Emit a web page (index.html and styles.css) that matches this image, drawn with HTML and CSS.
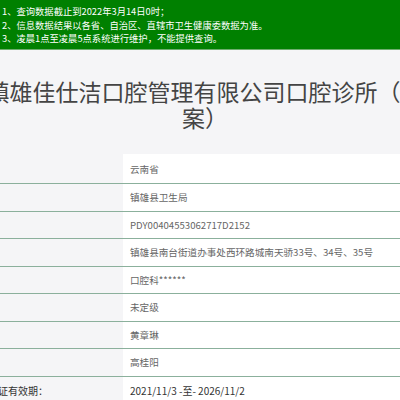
FILE: index.html
```html
<!DOCTYPE html>
<html lang="zh-CN">
<head>
<meta charset="utf-8">
<title>医疗机构查询</title>
<link rel="stylesheet" href="styles.css">
</head>
<body>
<div class="notice">
  <p>1、查询数据截止到2022年3月14日0时；</p>
  <p>2、信息数据结果以各省、自治区、直辖市卫生健康委数据为准。</p>
  <p>3、凌晨1点至凌晨5点系统进行维护，不能提供查询。</p>
</div>
<h1 class="title">镇雄佳仕洁口腔管理有限公司口腔诊所（备案）</h1>
<div class="info">
  <div class="row first"><div class="label">省份：</div><div class="value">云南省</div></div>
  <div class="row"><div class="label">登记机关：</div><div class="value">镇雄县卫生局</div></div>
  <div class="row"><div class="label">登记号：</div><div class="value">PDY00404553062717D2152</div></div>
  <div class="row"><div class="label">地址：</div><div class="value">镇雄县南台街道办事处西环路城南天骄33号、34号、35号</div></div>
  <div class="row"><div class="label">诊疗科目：</div><div class="value">口腔科******</div></div>
  <div class="row"><div class="label">等级：</div><div class="value">未定级</div></div>
  <div class="row"><div class="label">法人：</div><div class="value">黄章琳</div></div>
  <div class="row"><div class="label">负责人：</div><div class="value">高桂阳</div></div>
  <div class="row last"><div class="label">执业许可证有效期：</div><div class="value">2021/11/3 -至- 2026/11/2</div></div>
</div>
</body>
</html>
```
FILE: styles.css
```css
html, body {
  margin: 0;
  padding: 0;
  overflow: hidden;
  background: #f5f5f7;
  font-family: "Noto Sans CJK SC", "Noto Sans", sans-serif;
}
.notice {
  background: #008000;
  height: 50px;
  box-sizing: border-box;
  padding: 5px 0 0 2px;
  border-bottom: 1px solid #6fae6f;
  color: #fff;
  font-size: 9.3px;
  line-height: 13.5px;
}
.notice p {
  margin: 0;
  white-space: nowrap;
}
.title {
  margin: 28px -25px 0 -15px;
  font-size: 23px;
  line-height: 26px;
  font-weight: normal;
  color: #444;
  text-align: center;
}
.info {
  margin: 24px 0 0 -50px;
}
.row {
  display: grid;
  grid-template-columns: 173px 1fr;
  height: 27.5px;
  box-sizing: border-box;
  border-bottom: 1px solid #8bb09c;
  font-size: 9.6px;
  color: #666;
}
.row.first {
  height: 30px;
}
.row.last {
  border-bottom: none;
  color: #333;
  font-size: 10px;
}
.label {
  padding-left: 8px;
  display: flex;
  align-items: center;
  white-space: nowrap;
}
.value {
  background: #fff;
  padding-left: 7px;
  display: flex;
  align-items: center;
  white-space: nowrap;
}
```
